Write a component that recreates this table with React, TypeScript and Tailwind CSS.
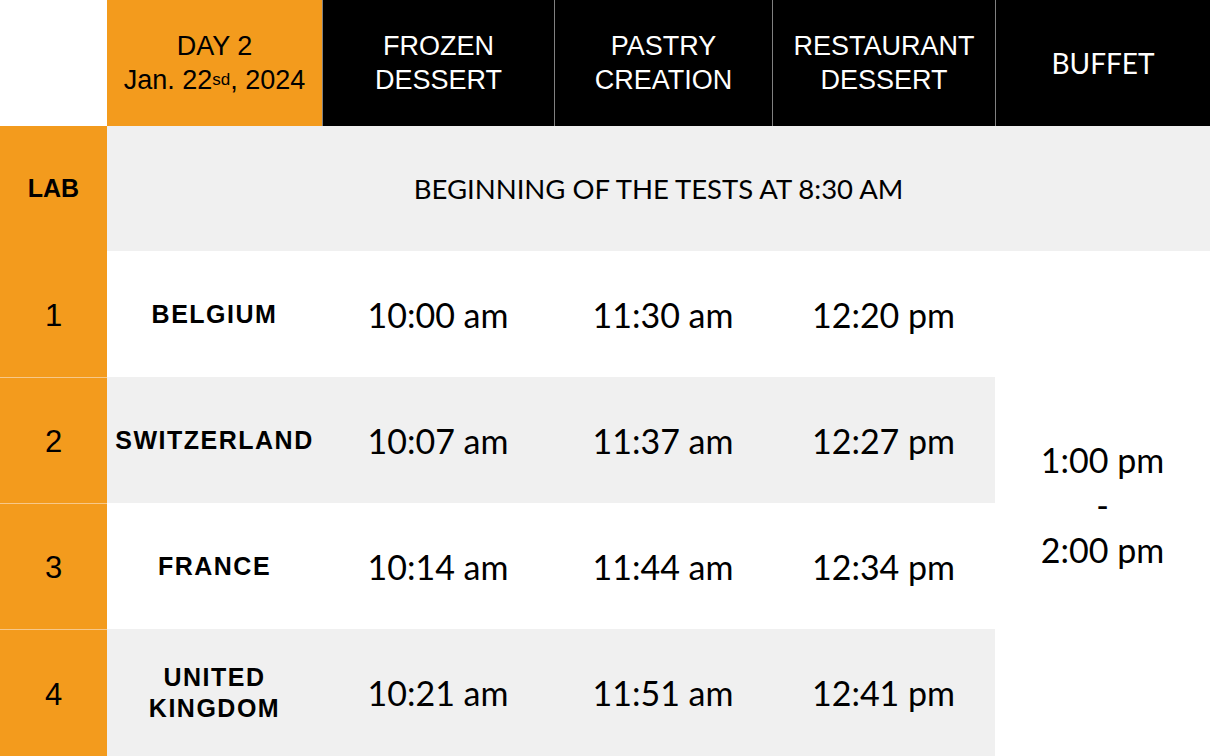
const ORANGE = "bg-[#f39b1d]";

const rows = [
  { lab: "1", country: ["BELGIUM"], times: ["10:00 am", "11:30 am", "12:20 pm"], shade: false },
  { lab: "2", country: ["SWITZERLAND"], times: ["10:07 am", "11:37 am", "12:27 pm"], shade: true },
  { lab: "3", country: ["FRANCE"], times: ["10:14 am", "11:44 am", "12:34 pm"], shade: false },
  { lab: "4", country: ["UNITED", "KINGDOM"], times: ["10:21 am", "11:51 am", "12:41 pm"], shade: true },
];

const headers = [
  ["FROZEN", "DESSERT"],
  ["PASTRY", "CREATION"],
  ["RESTAURANT", "DESSERT"],
];

const arial = "font-['Liberation_Sans',Arial,sans-serif]";
const lato = "font-['Lato','Open_Sans',sans-serif]";

export default function App() {
  return (
    <div className="w-[1210px] h-[756px] bg-white overflow-hidden">
      <div className="grid grid-cols-[107px_215px_232px_218px_223px_215px] grid-rows-[126px_125px_126px_126px_126px_127px] w-full h-full">
        {/* header */}
        <div className="bg-white" />
        <div className={`${ORANGE} ${arial} flex flex-col items-center justify-center text-[27px] leading-[34px] text-black`}>
          <span>DAY 2</span>
          <span>
            Jan. 22<sup className="text-[17px] relative -top-[4px]">sd</sup>, 2024
          </span>
        </div>
        {headers.map((h) => (
          <div
            key={h[0]}
            className={`bg-black border-l border-[#808080] ${arial} flex flex-col items-center justify-center text-[27px] leading-[34px] text-white`}
          >
            {h.map((l) => (
              <span key={l}>{l}</span>
            ))}
          </div>
        ))}
        <div className={`bg-black border-l border-[#808080] ${lato} flex items-center justify-center text-[28px] text-white`}>
          BUFFET
        </div>

        {/* beginning row */}
        <div className={`${ORANGE} ${arial} flex items-center justify-center font-bold text-[25px] text-black`}>
          LAB
        </div>
        <div className={`col-span-5 bg-[#f0f0f0] ${lato} flex items-center justify-center text-[27.5px] text-black`}>
          BEGINNING OF THE TESTS AT 8:30 AM
        </div>

        {rows.map((r, i) => {
          const bg = r.shade ? "bg-[#f0f0f0]" : "bg-white";
          return [
            <div
              key={`l${i}`}
              className={`${ORANGE} ${i > 0 ? "border-t border-[#f7c88a]" : ""} ${arial} flex items-center justify-center pt-[4px] text-[31px] text-black`}
              style={{ gridRow: i + 3, gridColumn: 1 }}
            >
              {r.lab}
            </div>,
            <div
              key={`c${i}`}
              className={`${bg} ${arial} flex flex-col items-center justify-center font-bold text-[25px] leading-[31px] tracking-[1.5px] text-black`}
              style={{ gridRow: i + 3, gridColumn: 2 }}
            >
              {r.country.map((c) => (
                <span key={c}>{c}</span>
              ))}
            </div>,
            ...r.times.map((t, j) => (
              <div
                key={`t${i}${j}`}
                className={`${bg} ${lato} flex items-center justify-center text-[34px] text-black`}
                style={{ gridRow: i + 3, gridColumn: j + 3 }}
              >
                {t}
              </div>
            )),
          ];
        })}

        <div className={`col-start-6 row-start-3 row-span-4 bg-white ${lato} flex flex-col items-center justify-center pt-[2px] text-[34px] leading-[45px] text-black`}>
          <span>1:00 pm</span>
          <span>-</span>
          <span>2:00 pm</span>
        </div>
      </div>
    </div>
  );
}
